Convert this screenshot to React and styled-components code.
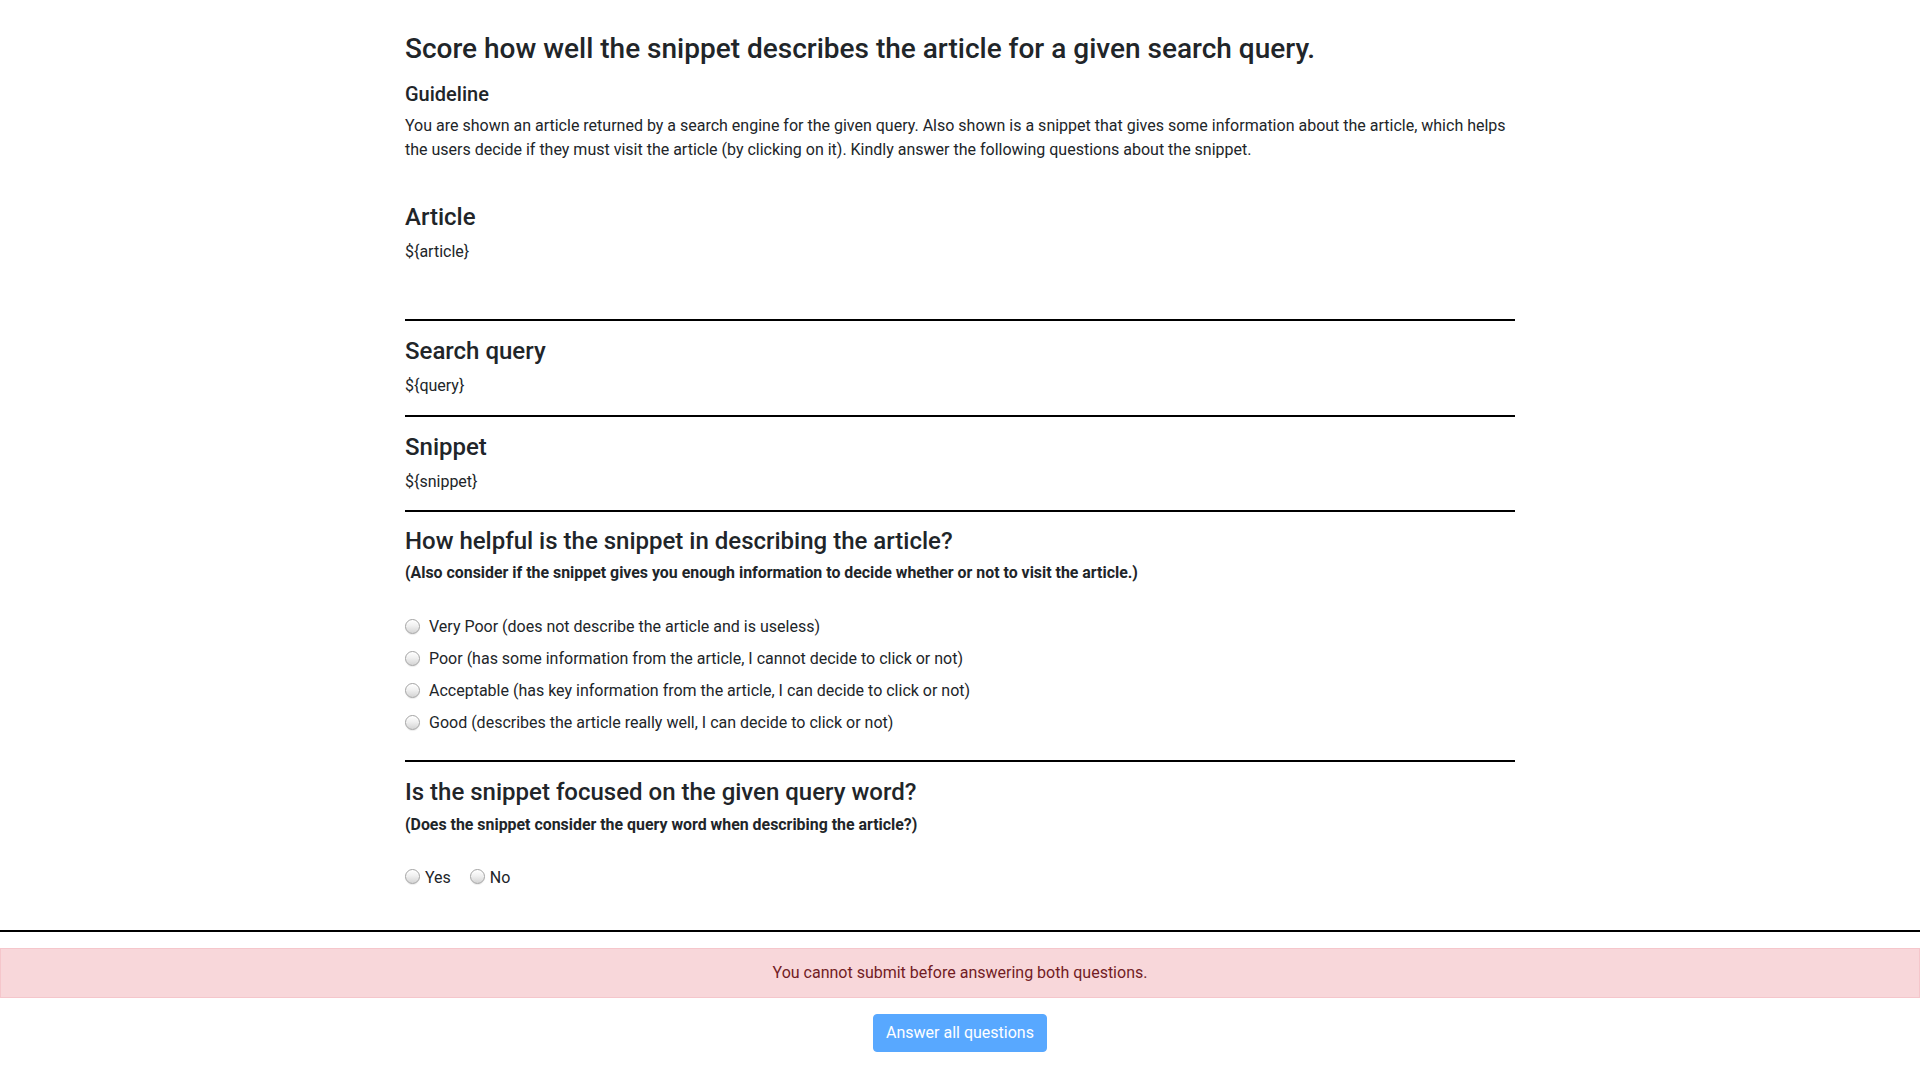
import React, { useState } from 'react';
import styled, { createGlobalStyle } from 'styled-components';

const GlobalStyle = createGlobalStyle`
  * { box-sizing: border-box; }
  body {
    margin: 0;
    background: #fff;
    color: #212529;
    font-family: Roboto, "Liberation Sans", Arial, sans-serif;
    font-size: 16px;
    line-height: 1.5;
  }
`;

const Container = styled.div`
  width: 1110px;
  margin: 0 auto;
  padding-top: 32px;
`;

const Title = styled.h3`
  margin: 0;
  font-size: 28px;
  font-weight: 500;
  line-height: 1.2;
`;

const SubHeading = styled.h5`
  margin: 16px 0 8px;
  font-size: 20px;
  font-weight: 500;
  line-height: 1.2;
`;

const Text = styled.p`
  margin: 0;
  font-size: 16px;
  line-height: 24px;
`;

const Section = styled.section`
  padding: ${(p) => p.$top}px 0 ${(p) => p.$bottom}px;
  border-bottom: ${(p) => (p.$rule ? '2px solid #000' : 'none')};
`;

const SectionTitle = styled.h4`
  margin: 0 0 ${(p) => (p.$tight ? 7 : 8)}px;
  font-size: 24px;
  font-weight: 500;
  line-height: 1.2;
`;

const Hint = styled.p`
  margin: 0;
  font-size: 15.9px;
  font-weight: 700;
  line-height: 22px;
`;

const OptionList = styled.div`
  margin-top: ${(p) => (p.$inline ? 30 : 31)}px;
  display: flex;
  flex-direction: ${(p) => (p.$inline ? 'row' : 'column')};
  gap: ${(p) => (p.$inline ? 19 : 8)}px;
`;

const Option = styled.label`
  display: flex;
  align-items: center;
  gap: ${(p) => (p.$inline ? 5 : 9)}px;
  font-size: 16px;
  line-height: 24px;
  cursor: pointer;
`;

const Radio = styled.input.attrs({ type: 'radio' })`
  appearance: none;
  margin: 0;
  width: 15px;
  height: 15px;
  flex: none;
  border-radius: 50%;
  border: 1px solid #a3a3a3;
  background: linear-gradient(180deg, #ffffff 0%, #f0f0f0 45%, #d4d4d4 100%);
  box-shadow: inset 0 1px 1px rgba(255, 255, 255, 0.9), 0 1px 1px rgba(0, 0, 0, 0.08);
  position: relative;
  top: ${(p) => (p.$raised ? -2 : -1)}px;
  cursor: pointer;
  &:checked::after {
    content: '';
    position: absolute;
    inset: 3px;
    border-radius: 50%;
    background: #333;
  }
`;

const FullRule = styled.hr`
  margin: 40px 0 0;
  border: 0;
  border-top: 2px solid #000;
`;

const Alert = styled.div`
  margin-top: 16px;
  padding: 12px 20px;
  background: #f8d7da;
  border: 1px solid #f5c6cb;
  color: #721c24;
  text-align: center;
  font-size: 16px;
  line-height: 24px;
`;

const Actions = styled.div`
  display: flex;
  justify-content: center;
  padding: 16px 0 17px;
`;

const SubmitButton = styled.button`
  font-family: inherit;
  font-size: 16px;
  line-height: 24px;
  padding: 6px 12px;
  border: 1px solid #007bff;
  border-radius: 4px;
  background: #007bff;
  color: #fff;
  opacity: ${(p) => (p.disabled ? 0.65 : 1)};
  cursor: ${(p) => (p.disabled ? 'default' : 'pointer')};
`;

const helpfulOptions = [
  'Very Poor (does not describe the article and is useless)',
  'Poor (has some information from the article, I cannot decide to click or not)',
  'Acceptable (has key information from the article, I can decide to click or not)',
  'Good (describes the article really well, I can decide to click or not)',
];

export default function App() {
  const [helpful, setHelpful] = useState(null);
  const [focused, setFocused] = useState(null);
  const done = helpful !== null && focused !== null;

  return (
    <>
      <GlobalStyle />
      <Container>
        <Title>Score how well the snippet describes the article for a given search query.</Title>
        <SubHeading>Guideline</SubHeading>
        <Text>
          You are shown an article returned by a search engine for the given query. Also shown is a snippet that gives
          some information about the article, which helps the users decide if they must visit the article (by clicking
          on it). Kindly answer the following questions about the snippet.
        </Text>

        <Section $top={41.6} $bottom={55} $rule>
          <SectionTitle>Article</SectionTitle>
          <Text>{'${article}'}</Text>
        </Section>

        <Section $top={16} $bottom={17} $rule>
          <SectionTitle>Search query</SectionTitle>
          <Text>{'${query}'}</Text>
        </Section>

        <Section $top={16} $bottom={16} $rule>
          <SectionTitle>Snippet</SectionTitle>
          <Text>{'${snippet}'}</Text>
        </Section>

        <Section $top={15} $bottom={25} $rule>
          <SectionTitle $tight>How helpful is the snippet in describing the article?</SectionTitle>
          <Hint>(Also consider if the snippet gives you enough information to decide whether or not to visit the article.)</Hint>
          <OptionList>
            {helpfulOptions.map((label, i) => (
              <Option key={label}>
                <Radio name="helpful" checked={helpful === i} onChange={() => setHelpful(i)} />
                {label}
              </Option>
            ))}
          </OptionList>
        </Section>

        <Section $top={16} $bottom={0}>
          <SectionTitle $tight>Is the snippet focused on the given query word?</SectionTitle>
          <Hint>(Does the snippet consider the query word when describing the article?)</Hint>
          <OptionList $inline>
            {['Yes', 'No'].map((label) => (
              <Option key={label} $inline>
                <Radio name="focused" $raised checked={focused === label} onChange={() => setFocused(label)} />
                {label}
              </Option>
            ))}
          </OptionList>
        </Section>
      </Container>

      <FullRule />
      {!done && <Alert>You cannot submit before answering both questions.</Alert>}
      <Actions>
        <SubmitButton disabled={!done}>{done ? 'Submit' : 'Answer all questions'}</SubmitButton>
      </Actions>
    </>
  );
}
